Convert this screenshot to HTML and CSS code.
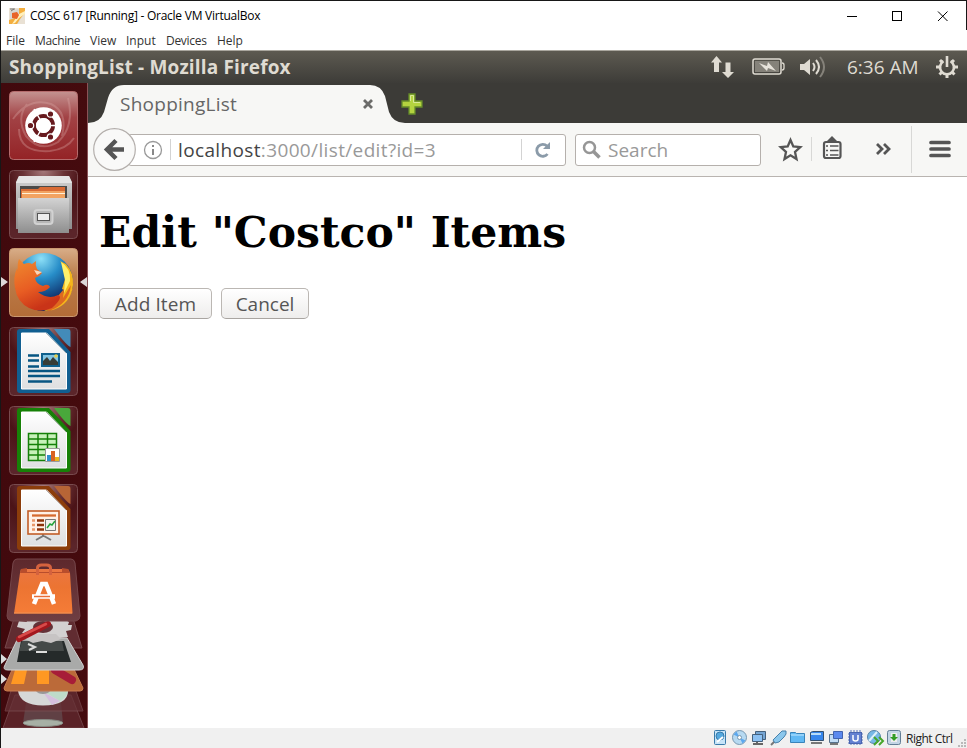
FILE: index.html
```html
<!DOCTYPE html>
<html lang="en">
<head>
<meta charset="utf-8">
<title>COSC 617 [Running] - Oracle VM VirtualBox</title>
<link rel="stylesheet" href="styles.css">
</head>
<body>
<div class="window">
  <header class="titlebar">
    <svg class="app-icon" width="16" height="16" viewBox="0 0 16 16"><rect width="16" height="16" fill="#e9e1d4"/><path d="M1 3l9-2 5 3-6 12H1z" fill="#d8d6d2"/><path d="M10 0h6v5l-5 6-3 5H0v-4l6-2 4-4z" fill="#f4ae3e"/><path d="M10 6l6-3v3l-6 4-4 5-3 1 4-6z" fill="#fff0bd"/><path d="M3 5l5-1 2 3-2 4-5-1z" fill="#e8632a"/><path d="M1 1h5M2 3l3-2" stroke="#777"/></svg>
    <span class="title-text">COSC 617 [Running] - Oracle VM VirtualBox</span>
    <svg class="window-buttons" width="126" height="28" viewBox="0 0 126 28" fill="none" stroke="#000" shape-rendering="crispEdges"><path d="M5 14.500h10M50.500 9.500h9v9h-9z"/><path d="M96 9.500l9.500 9.500M105.500 9.500l-9.500 9.500" shape-rendering="auto"/></svg>
  </header>
  <nav class="menubar"><span class="m1">File</span><span class="m2">Machine</span><span class="m3">View</span><span class="m4">Input</span><span class="m5">Devices</span><span class="m6">Help</span></nav>
  <div class="guest">
    <div class="panel">
      <span class="panel-title">ShoppingList - Mozilla Firefox</span>
      <div class="indicators">
        <svg width="24" height="24" viewBox="0 0 24 24" fill="#dfdbd2"><path d="M6.500 1L12 7.500H9V17H4V7.500H1zM18 23l-6-6h3.500V7.500h5V17H24z"/></svg>
        <svg class="battery" width="33" height="18" viewBox="0 0 33 18"><rect x="1" y="1" width="28" height="15" rx="2" fill="none" stroke="#dfdbd2" stroke-width="1.500"/><rect x="3" y="3" width="24" height="11" fill="#85827a"/><path d="M30 5q2 0 2 2v3q0 2-2 2" fill="none" stroke="#dfdbd2" stroke-width="1.300"/><path d="M7 5l8 3 1-4 8 9-8-3-1 3z" fill="#e6e2da"/></svg>
        <svg class="sound" width="28" height="24" viewBox="0 0 28 24"><path d="M1 9h4l6-5v16l-6-5H1z" fill="#dfdbd2"/><g fill="none" stroke="#dfdbd2" stroke-width="2"><path d="M14 8q3 4 0 8"/><path d="M17 5q6 7 0 14"/><path d="M21 2q8 10 0 20" stroke="#85827a"/></g></svg>
        <span class="clock">6:36 AM</span>
        <svg class="gear" width="22" height="22" viewBox="0 0 22 22" fill="none" stroke="#dfdbd2"><path d="M7.500 5.200a7 7 0 1 0 7 0" stroke-width="2.700"/><path d="M11 0v11" stroke-width="2.600"/><path d="M4 4l2 2M18 4l-2 2M0 11h4M18 11h4M3.500 18.500l2-2M18.500 18.500l-2-2M11 18v4" stroke-width="3"/></svg>
      </div>
    </div>
    <div class="desktop">
      <aside class="launcher">
        <svg class="tile" viewBox="0 0 69 69">
          <defs>
            <linearGradient id="red" x2="0" y2="1"><stop stop-color="#c49391"/><stop offset=".38" stop-color="#a24245"/><stop offset="1" stop-color="#942326"/></linearGradient>
            <radialGradient id="glass" cx=".5" cy="0" r="1"><stop stop-color="#a5797b"/><stop offset=".3" stop-color="#6a3336"/><stop offset=".55" stop-color="#4b1317"/><stop offset="1" stop-color="#5b252a"/></radialGradient>
            <linearGradient id="paper" x2="0" y2="1"><stop stop-color="#fff"/><stop offset="1" stop-color="#dedfe0"/></linearGradient>
            <linearGradient id="metal" x2="0" y2="1"><stop stop-color="#d3d3d3"/><stop offset="1" stop-color="#8e8e8e"/></linearGradient>
          </defs>
          <rect x=".5" y=".5" width="68" height="68" rx="4" fill="url(#red)" stroke="#b56c6d"/>
          <g fill="none" stroke="#dba9a7" opacity=".35" stroke-width="2"><path d="M4 28Q20 6 42 13Q59 21 53 45M59 7Q66 35 49 51Q31 62 17 45Q7 27 18 13M10 38Q10 62 41 60Q58 58 65 47"/></g>
          <circle cx="34.500" cy="34.500" r="18.300" fill="#fff"/>
          <circle cx="34.500" cy="34.500" r="9.500" fill="none" stroke="#671a1e" stroke-width="4"/>
          <path d="M34.500 34.500L25 18M34.500 34.500L52 34.500M34.500 34.500L25 51" stroke="#fff" stroke-width="1.500"/><circle cx="34.500" cy="34.500" r="7.500" fill="#fff"/>
          <g fill="#671a1e" stroke="#fff" stroke-width="1.200"><circle cx="21.500" cy="34.500" r="3.200"/><circle cx="41.500" cy="23" r="3.200"/><circle cx="41.500" cy="46" r="3.200"/></g>
        </svg>
        <svg class="tile" viewBox="0 0 69 69"><rect x=".5" y=".5" width="68" height="68" rx="4" fill="url(#glass)" stroke="#784b4e"/><path d="M10 6h50l3 6v47H7V12z" fill="url(#metal)"/><path d="M10 6h50l3 7H7z" fill="#e5e5e5"/><path d="M11 16h47v14H11z" fill="#4b4a49"/><path d="M12 19h17l2-2h25v13H12z" fill="#d86b35"/><path d="M13 21h43v10H13z" fill="#f2a361"/><path d="M13 23.500h43" stroke="#fff1d8"/><path d="M9 28h51v35H9z" fill="url(#metal)"/><rect x="25.500" y="40" width="18" height="14" rx="3" fill="#b7b7b7" stroke="#d2d2d2" stroke-width="2"/><rect x="28.500" y="43.500" width="12" height="7" fill="#eee" stroke="#555"/></svg>
        <svg class="tile" viewBox="0 0 69 69">
          <defs><linearGradient id="tan" x2="0" y2="1"><stop stop-color="#d8ad88"/><stop offset=".4" stop-color="#bb7d4b"/><stop offset="1" stop-color="#b36c37"/></linearGradient><radialGradient id="globe" cx=".45" cy=".1" r=".75"><stop stop-color="#8de0f7"/><stop offset=".45" stop-color="#278dc8"/><stop offset="1" stop-color="#0c2864"/></radialGradient><linearGradient id="fox" x2=".4" y2="1"><stop stop-color="#ef8b2f"/><stop offset=".6" stop-color="#e85d23"/><stop offset="1" stop-color="#c93418"/></linearGradient></defs>
          <rect x=".5" y=".5" width="68" height="68" rx="4" fill="url(#tan)" stroke="#cb9971"/><circle cx="35" cy="34" r="29" fill="url(#globe)"/>
          <path d="M51 13L57 16Q65 25 64 37Q62 56 44 62L35 63Q53 54 55 42L53 41L56 31Q57 20 51 13z" fill="#f5b51b"/><path d="M52 14q10 6 9 19l-6 12 1-13z" fill="#fff16b"/><path d="M62 37q-2 19-22 26l-10-5 18-9 7-8-1 9z" fill="#df6a20"/>
          <path d="M10 11L15 16Q20 14 23 16L27 13Q26 17 28 21L33 25Q30 29 26 30Q27 36 34 38Q39 35 41 39Q37 44 29 44Q39 52 49 47Q55 49 43 60Q31 65 20 60Q8 54 6 40Q4 29 8 20L9 23Q8 16 10 11z" fill="url(#fox)"/><path d="M25 22l8 2-5 3z" fill="#f8d7b9"/>
        </svg>
        <svg class="tile" viewBox="0 0 69 69"><rect x=".5" y=".5" width="68" height="68" rx="4" fill="url(#glass)" stroke="#784b4e"/><path d="M11 2h29l21.500 23v38q0 3-3 3H11q-3 0-3-3V5q0-3 3-3z" fill="#115f91"/><path d="M45 2h14q2.500 0 2.500 3v15Q58 19 45 2z" fill="#438bb9"/><path d="M12.500 6h25l20 20.500V62h-45z" fill="url(#paper)" stroke="#fff"/><path d="M37 6l20 20" stroke="#a5b5be"/><path d="M19 28.500h11M19 33.500h11M19 39.500h11M19 44h32M19 49h32M19 54.500h24" stroke="#075582" stroke-width="2.500"/><path d="M32 26h19v14H32z" fill="#0f608d"/><path d="M34 28h15v10H34z" fill="#83c4e1"/><path d="M34 38v-4l4-4 3 4 3-4 5 5v3z" fill="#373c36"/><circle cx="47" cy="29" r="1.800" fill="#e3ce4b"/></svg>
        <svg class="tile" viewBox="0 0 69 69"><rect x=".5" y=".5" width="68" height="68" rx="4" fill="url(#glass)" stroke="#784b4e"/><path d="M11 2h29l21.500 23v38q0 3-3 3H11q-3 0-3-3V5q0-3 3-3z" fill="#178107"/><path d="M45 2h14q2.500 0 2.500 3v15Q58 19 45 2z" fill="#49a83b"/><path d="M12.500 6h25l20 20.500V62h-45z" fill="url(#paper)" stroke="#fff"/><path d="M37 6l20 20" stroke="#a5b5a5"/><path d="M19 27.500h29v27H19z" fill="#c6f1b9"/><path d="M19.500 27.500h28v27h-28zM29 27v28M38.500 27v28M19 33h29M19 38.500h29M19 43.500h29M19 49h29" fill="none" stroke="#148008" stroke-width="1.500"/><path d="M36.500 42.500h14v13h-14z" fill="#fff" stroke="#9a9a9a"/><path d="M38 49h4v6h-4z" fill="#2f91cc"/><path d="M42 45h4v10h-4z" fill="#d86224"/><path d="M46 51h4v4h-4z" fill="#e9b71e"/></svg>
        <svg class="tile" viewBox="0 0 69 69"><rect x=".5" y=".5" width="68" height="68" rx="4" fill="url(#glass)" stroke="#784b4e"/><path d="M11 2h29l21.500 23v38q0 3-3 3H11q-3 0-3-3V5q0-3 3-3z" fill="#8c3d0b"/><path d="M45 2h14q2.500 0 2.500 3v15Q58 19 45 2z" fill="#b76536"/><path d="M12.500 6h25l20 20.500V62h-45z" fill="url(#paper)" stroke="#fff"/><path d="M37 6l20 20" stroke="#b6aaa4"/><path d="M34 49v3l-7 4M35 52l7 4" fill="none" stroke="#777" stroke-width="2"/><rect x="19" y="27" width="31" height="23" fill="#fff2e8" stroke="#c25d27" stroke-width="1.600"/><path d="M23 31.500h24" stroke="#d66b30" stroke-width="2.300"/><path d="M23 36.500h3M23 41h3M23 45.500h3" stroke="#e99768" stroke-width="2.500"/><path d="M28 36.500h7M28 41h7M28 45.500h7" stroke="#8c3209" stroke-width="2.500"/><path d="M36.500 35.500h10v11h-10z" fill="#f0f1ed" stroke="#777"/><path d="M38 44l3-4 2 1 3-4" fill="none" stroke="#25a33b" stroke-width="1.500"/></svg>
        <svg class="stack" width="86" height="175" viewBox="0 0 86 175">
          <defs><linearGradient id="bag" x2="0" y2="1"><stop stop-color="#ea7642"/><stop offset=".4" stop-color="#ec7432"/><stop offset="1" stop-color="#f57c37"/></linearGradient><linearGradient id="veil" x2="0" y2="1"><stop stop-color="#5d282c"/><stop offset="1" stop-color="#6f3e42"/></linearGradient></defs>
          <path d="M14 142h56l13 33H2z" fill="#5a2227" stroke="#704045"/><path d="M25 150h35l2 20H22z" fill="#604044"/><ellipse cx="42" cy="170" rx="20" ry="3.500" fill="#a7b0a5" stroke="#858982"/>
          <path d="M14 124h56l12 34H4z" fill="#663136" opacity=".7" stroke="#7f5054"/><path d="M17 138h50q0 14-25 14.500Q19 152 17 138z" fill="#d6d8d7"/><path d="M42 138h25q-1 6-8 10z" fill="#bedbc9"/><path d="M42 139l17 9-8 4z" fill="#d6bfde"/><path d="M35 138h14q-2 3-7 3t-7-3z" fill="#999"/>
          <path d="M14 110h56l12 25q0 3-3 3H6q-3 0-3-3z" fill="#bb6a39" stroke="#c77b4e"/><path d="M14 117h12l-3 14H10zM36 115h12v16H36z" fill="#ff9823"/><path d="M54 117l17 10" stroke="#a71d38" stroke-width="8" stroke-linecap="round"/>
          <path d="M14 62h57l10 33H4z" fill="#612c31" stroke="#77494d"/><path d="M24 65l8-1 2-2 6 1 3-1 6 1 4-3 12 2-2 4 5 3-1 3h4l-1 5-5 1 2 6-9 1-3 4-9-2-9 2-8-7-8-2 3-4-8-2 2-6 8 1z" fill="#d3d1d1"/><ellipse cx="42" cy="74" rx="10" ry="6" fill="#633238"/>
          <path d="M17 85h49l16 27q2 5-4 5H7q-6 0-3-5z" fill="#a9aaa9" stroke="#d2d2d2"/><path d="M20 88h43l7 21H16z" fill="#252a2a"/><path d="M21 88h40l2 10H18z" fill="#444948"/><path d="M27 91l7 3-6 3M35 99h11" fill="none" stroke="#ddd" stroke-width="2"/><path d="M32 81h23l5 5-10 4-9-2-9 2-8-4z" fill="#c7c4c4"/>
          <path d="M18 86l29-15" stroke="#a3181e" stroke-width="6" stroke-linecap="round"/><path d="M18 84l27-13" stroke="#d84a49" stroke-width="2.500" stroke-linecap="round"/>
          <path d="M16 6h54q3 0 4 4l5 53q0 4-4 5H10q-4-1-4-5l6-53q1-4 4-4z" fill="url(#veil)" stroke="#75464a"/><path d="M19 20l1-4h47l2 4 2.500 40.500H13z" fill="url(#bag)"/><path d="M19 20l1-4 6-1v4h35v-4l6 1 2 4z" fill="#b84d2c"/><path d="M36.500 22v-7q0-3 4-3h5q4 0 4 3v7" fill="none" stroke="#d4623e" stroke-width="3"/><path d="M13 60h58" stroke="#f29255"/><path d="M33 51l8-20h4l8 20M31 43.500h23" fill="none" stroke="#fff" stroke-width="4.500"/><path d="M33 43.500h16" stroke="#e96d35" stroke-width="1.500"/>
          <path d="M0 101l6 5-6 5M0 121l6 5-6 5" fill="#ddd"/>
        </svg>
        <svg class="run-marks" width="86" height="12" viewBox="0 0 86 12" fill="#ddd8d8"><path d="M0 1l7 5-7 5zM86 1l-7 5 7 5z"/></svg>
      </aside>
      <main class="browser">
        <div class="tabstrip">
          <svg class="tab-shape" width="320" height="40" viewBox="0 0 320 40"><path d="M0 40q12 0 16-11l4-14Q24 2 36 2h246q11 0 15 11l4 16q4 11 16 11z" fill="#f7f7f5"/></svg>
          <span class="tab-title">ShoppingList</span>
          <svg class="tab-close" width="12" height="12" viewBox="0 0 12 12"><path d="M2 2l8 8M10 2l-8 8" stroke="#6b6b69" stroke-width="2.800"/></svg>
          <svg class="new-tab" width="22" height="22" viewBox="0 0 22 22"><path d="M8 1h6v7h7v6h-7v7H8v-7H1V8h7z" fill="#b4d33f" stroke="#658c2a" stroke-width="1.300"/><path d="M9.500 8V2.500h3V9.500H19" fill="none" stroke="#d9e996"/></svg>
        </div>
        <div class="toolbar">
          <svg class="back" width="43" height="43" viewBox="0 0 43 43"><circle cx="21.500" cy="21.500" r="20.800" fill="#f9f9f8" stroke="#b3aeab" stroke-width="1.200"/><path d="M31 21.500H16M23 12.500l-9 9 9 9" fill="none" stroke="#555" stroke-width="4.500"/></svg>
          <div class="urlbar">
            <svg class="info" width="20" height="20" viewBox="0 0 20 20"><circle cx="10" cy="10" r="8.500" fill="none" stroke="#999" stroke-width="1.300"/><path d="M10 9v6M10 5v2" stroke="#888" stroke-width="2"/></svg>
            <i class="divider"></i><span class="url"><b>localhost</b>:3000/list/edit?id=3</span><i class="divider reload-line"></i>
            <svg class="reload" width="18" height="18" viewBox="0 0 18 18"><path d="M13.500 13A6 6 0 1 1 13 5" fill="none" stroke="#8b9ba9" stroke-width="2.800"/><path d="M9 8h7V1z" fill="#8b9ba9"/></svg>
          </div>
          <div class="search"><svg width="20" height="20" viewBox="0 0 20 20" fill="none" stroke="#969696"><circle cx="7.500" cy="7.500" r="5.500" stroke-width="2.500"/><path d="M11.500 11.500l6 6" stroke-width="3.500"/></svg><span>Search</span></div>
          <svg class="tools" width="206" height="53" viewBox="0 0 206 53" fill="none" stroke="#555"><path d="M29.500 17l2.800 6.500 7 .7-5.300 4.800 1.500 7-6-3.700-6 3.700 1.500-7-5.300-4.800 7-.7z" stroke-width="2.300"/><path d="M50.500 14v24M150.500 3v47" stroke="#d8d8d6"/><rect x="63" y="19" width="16.500" height="16" rx="2" stroke-width="2.200"/><path d="M66 18l5-5 5 5v1H66z" fill="#555" stroke="none"/><path d="M65 23h2M69 23h8.500M65 27.500h2M69 27.500h8.500M65 32h2M69 32h8.500" stroke-width="1.500"/><path d="M116 21l5 5-5 5M123 21l5 5-5 5" stroke-width="2.800"/><path d="M170 19.500h18M170 26h18M170 32.500h18" stroke-width="3.700" stroke-linecap="round"/></svg>
        </div>
        <section class="page"><h1>Edit "Costco" Items</h1><div class="actions"><button class="add">Add Item</button><button class="cancel">Cancel</button></div></section>
      </main>
    </div>
  </div>
  <footer class="statusbar">
    <svg width="193" height="18" viewBox="0 0 193 18"><g stroke="#397bab"><rect x="2.500" y="1.500" width="11" height="14" rx="1" fill="#c6e4f8"/><circle cx="8" cy="7" r="4" fill="#55a9df"/><path d="M5 13l6-5" stroke="#fff" stroke-width="2"/></g>
    <circle cx="27.500" cy="8.500" r="7" fill="#b6d9f1" stroke="#7898b1"/><path d="M27.500 8.500l-6-3 3-3zM27.500 8.500l6 3-3 3z" fill="#5ca8ef"/><circle cx="27.500" cy="8.500" r="2" fill="#fff" stroke="#7898b1"/>
    <path d="M43.500 2.500h10v8h-10z" fill="#75a5d3" stroke="#46617c"/><path d="M40.500 5.500h10v7h-10z" fill="#8cc1f3" stroke="#46617c"/><path d="M41 15h10M45 13v2" stroke="#666" stroke-width="2"/>
    <path d="M59 16l4-4" stroke="#777" stroke-width="2"/><path d="M61 11l3-3 4-4 2-2h4v3l-2 3-5 5-4 1z" fill="#8bc7ec" stroke="#4781ab"/>
    <path d="M78.500 5.500V3.500h5l1 1h8v9h-14z" fill="#61b9f4" stroke="#3984ba"/><path d="M79 6h13" stroke="#c4e8ff"/>
    <path d="M98.500 3.500l2-1h11v9h-13z" fill="#3686ec" stroke="#35516f"/><path d="M99 4h10v2H99z" fill="#b6dcf9"/><path d="M99 14h11" stroke="#777" stroke-width="2"/>
    <path d="M117.500 5.500h9v8h-9z" fill="#c2dcf4" stroke="#57718c"/><path d="M121.500 2.500h9v7h-9z" fill="#5b89ee" stroke="#4263ae"/><path d="M118 15h8" stroke="#777" stroke-width="2"/>
    <path d="M139 1v15M142 1v15M145 1v15M148 1v15M136 5h15M136 8h15M136 11h15M136 14h15" stroke="#5975bb"/><rect x="137.500" y="3.500" width="12" height="11" fill="#6380d1" stroke="#4965b0"/><path d="M141 6v4q0 2 2.500 2t2.500-2V6" fill="none" stroke="#fff" stroke-width="1.500"/>
    <circle cx="162" cy="8" r="6.500" fill="#78b8e6" stroke="#5783a7"/><path d="M157 12l8-9" stroke="#dff1fa" stroke-width="2"/><path d="M162 8l4 4-4 4M167 8l4 4-4 4" fill="none" stroke="#46a72b" stroke-width="2"/>
    <rect x="175.500" y="1.500" width="13" height="14" rx="2" fill="#c2d5e5" stroke="#627e96"/><path d="M179 4h6v9h-6z" fill="#eee"/><path d="M180.500 5h3v3h2.500l-4 4-4-4h2.500z" fill="#319c25"/></svg>
    <span>Right Ctrl</span>
    <svg class="grip" width="9" height="9" viewBox="0 0 9 9"><path d="M6 0h2v2H6zM3 3h2v2H3zM6 3h2v2H6zM0 6h2v2H0zM3 6h2v2H3zM6 6h2v2H6z" fill="#b9b9b9"/></svg>
  </footer>
</div>
</body>
</html>
```
FILE: styles.css
```css
* { box-sizing: border-box; }
body { margin: 0; background: #fff; font-family: "Open Sans", sans-serif; }
svg { display: block; flex: none; }
.window { width: 967px; height: 748px; display: flex; flex-direction: column; border-top: 1px solid #171717; border-left: 1px solid #171717; overflow: hidden; white-space: nowrap; }
.titlebar { height: 29px; display: flex; align-items: center; padding-left: 8px; border-right: 1px solid #171717; font-size: 12px; color: #000; }
.title-text { margin-left: 5px; letter-spacing: -0.25px; }
.window-buttons { margin-left: auto; margin-right: -2px; }
.menubar { height: 20px; display: flex; align-items: center; padding-left: 5px; font-size: 12px; color: #333; }
.menubar span { flex: none; }
.m1 { width: 29px; } .m2 { width: 55px; letter-spacing: -0.35px; } .m3 { width: 36px; } .m4 { width: 40px; } .m5 { width: 51px; letter-spacing: -0.3px; }
.guest { height: 678px; display: flex; flex-direction: column; }
.panel { height: 33px; display: flex; align-items: center; justify-content: space-between; padding: 0 9px 0 8px; border-top: 1px solid #aaa79f; background: linear-gradient(#5d5a51, #3d3c38); color: #dfdbd2; }
.panel-title { font-size: 19px; font-weight: 700; letter-spacing: 0.16px; }
.indicators { display: flex; align-items: center; }
.battery { margin-left: 18px; } .sound { margin-left: 14px; } .clock { width: 73px; margin-left: 20px; font-size: 19px; } .gear { margin-left: 16px; }
.indicators > svg:first-child { margin-left: -1px; }
.desktop { flex: 1; min-height: 0; display: flex; }
.launcher { position: relative; width: 87px; height: 645px; padding-top: 8px; background: linear-gradient(90deg, #41090d, #450b0e); border-right: 1px solid #8a5357; overflow: hidden; }
.tile { width: 69px; height: 69px; margin: 0 0 9.65px 8px; }
.stack { margin-top: -10px; }
.run-marks { position: absolute; left: 0; top: 193px; }
.browser { flex: 1; min-width: 0; background: #fff; }
.tabstrip { position: relative; height: 40px; padding-left: 32px; display: flex; align-items: center; background: #3c3b37; }
.tab-shape { position: absolute; left: 0; top: 0; }
.tab-title { position: relative; top: 1px; width: 118px; font-size: 19px; letter-spacing: 0.25px; color: #666; }
.tab-close { position: relative; margin-left: 124px; top: 1px; }
.new-tab { margin: 2px 0 0 27px; }
.toolbar { height: 54px; display: flex; align-items: center; padding-left: 5px; background: #f7f7f5; border-bottom: 1px solid #b9b4b0; }
.back { position: relative; z-index: 1; }
.urlbar { width: 438px; height: 32px; margin-left: -8px; display: flex; align-items: center; padding-left: 14px; border: 1px solid #b5b0ac; border-radius: 3px; background: #fff; }
.divider { width: 1px; height: 21px; margin-left: 7px; background: #d3d3d3; }
.url { width: 259px; margin-left: 7px; font-size: 19px; letter-spacing: 0.36px; color: #999; }
.url b { font-weight: 400; color: #444; }
.reload-line { margin-left: 84px; }
.reload { margin-left: 12px; }
.search { width: 186px; height: 32px; margin-left: 9px; display: flex; align-items: center; gap: 6px; padding-left: 6px; border: 1px solid #b5b0ac; border-radius: 3px; background: #fff; font-size: 19px; color: #999; }
.page { padding: 28px 11px; }
h1 { margin: 0; font: 700 42.5px/54px "DejaVu Serif", serif; color: #000; }
.actions { display: flex; gap: 9px; margin-top: 29px; }
button { height: 31px; padding: 0; border: 1px solid #bbb7b3; border-bottom-color: #a9a5a1; border-radius: 5px; background: linear-gradient(#fff, #eeedec); font: 19px/28px "Open Sans", sans-serif; color: #555; }
.add { width: 113px; letter-spacing: 0.1px; } .cancel { width: 88px; }
.statusbar { height: 20px; display: flex; align-items: center; padding-left: 711px; background: #f0f0f0; color: #222; font-size: 12px; }
.statusbar span { width: 50px; margin-left: 1px; letter-spacing: -0.5px; }
.grip { margin-left: 2px; align-self: flex-end; }
```
